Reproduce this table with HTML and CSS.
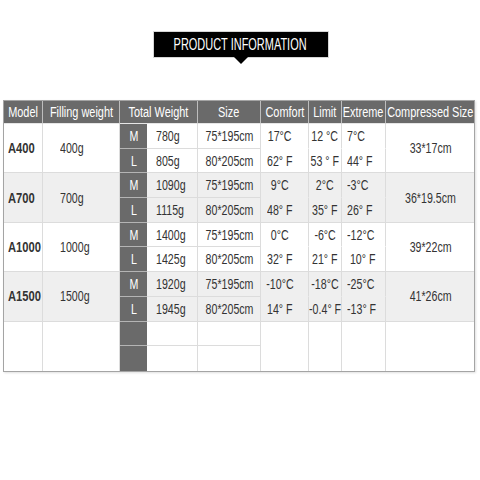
FILE: index.html
```html
<!DOCTYPE html>
<html lang="en">
<head>
<meta charset="utf-8">
<title>Product Information</title>
<link rel="stylesheet" href="styles.css">
</head>
<body>
<div class="page">
  <div class="title-wrap">
    <h1 class="title"><span class="title-text">PRODUCT INFORMATION</span></h1>
  </div>
  <div class="spec">
    <div class="h"><span>Model</span></div>
    <div class="h"><span>Filling weight</span></div>
    <div class="h span2"><span>Total Weight</span></div>
    <div class="h"><span>Size</span></div>
    <div class="h"><span>Comfort</span></div>
    <div class="h"><span>Limit</span></div>
    <div class="h"><span>Extreme</span></div>
    <div class="h last"><span>Compressed Size</span></div>

    <div class="c model"><span>A400</span></div>
    <div class="c fill"><span>400g</span></div>
    <div class="c t"><span>M</span></div>
    <div class="c w"><span>780g</span></div>
    <div class="c s"><span>75*195cm</span></div>
    <div class="c tc top"><span>17°C</span></div>
    <div class="c tl top"><span>12 °C</span></div>
    <div class="c te top"><span>7°C</span></div>
    <div class="c cs"><span>33*17cm</span></div>
    <div class="c t"><span>L</span></div>
    <div class="c w"><span>805g</span></div>
    <div class="c s"><span>80*205cm</span></div>
    <div class="c tc"><span>62° F</span></div>
    <div class="c tl"><span>53 ° F</span></div>
    <div class="c te"><span>44° F</span></div>

    <div class="c model g"><span>A700</span></div>
    <div class="c fill g"><span>700g</span></div>
    <div class="c t"><span>M</span></div>
    <div class="c w g"><span>1090g</span></div>
    <div class="c s g"><span>75*195cm</span></div>
    <div class="c tc top g"><span>9°C</span></div>
    <div class="c tl top g"><span>2°C</span></div>
    <div class="c te top g"><span>-3°C</span></div>
    <div class="c cs g"><span>36*19.5cm</span></div>
    <div class="c t"><span>L</span></div>
    <div class="c w g"><span>1115g</span></div>
    <div class="c s g"><span>80*205cm</span></div>
    <div class="c tc g"><span>48° F</span></div>
    <div class="c tl g"><span>35° F</span></div>
    <div class="c te g"><span>26° F</span></div>

    <div class="c model"><span>A1000</span></div>
    <div class="c fill"><span>1000g</span></div>
    <div class="c t"><span>M</span></div>
    <div class="c w"><span>1400g</span></div>
    <div class="c s"><span>75*195cm</span></div>
    <div class="c tc top"><span>0°C</span></div>
    <div class="c tl top"><span>-6°C</span></div>
    <div class="c te top"><span>-12°C</span></div>
    <div class="c cs"><span>39*22cm</span></div>
    <div class="c t"><span>L</span></div>
    <div class="c w"><span>1425g</span></div>
    <div class="c s"><span>80*205cm</span></div>
    <div class="c tc"><span>32° F</span></div>
    <div class="c tl"><span>21° F</span></div>
    <div class="c te"><span>&nbsp;10° F</span></div>

    <div class="c model g"><span>A1500</span></div>
    <div class="c fill g"><span>1500g</span></div>
    <div class="c t"><span>M</span></div>
    <div class="c w g"><span>1920g</span></div>
    <div class="c s g"><span>75*195cm</span></div>
    <div class="c tc top g"><span>-10°C</span></div>
    <div class="c tl top g"><span>-18°C</span></div>
    <div class="c te top g"><span>-25°C</span></div>
    <div class="c cs g"><span>41*26cm</span></div>
    <div class="c t"><span>L</span></div>
    <div class="c w g"><span>1945g</span></div>
    <div class="c s g"><span>80*205cm</span></div>
    <div class="c tc g"><span>14° F</span></div>
    <div class="c tl g"><span>-0.4° F</span></div>
    <div class="c te g"><span>-13° F</span></div>

    <div class="c model end"></div>
    <div class="c fill end"></div>
    <div class="c t"></div>
    <div class="c w"></div>
    <div class="c s"></div>
    <div class="c tc span end"></div>
    <div class="c tl span end"></div>
    <div class="c te span end"></div>
    <div class="c cs end"></div>
    <div class="c t end"></div>
    <div class="c w end"></div>
    <div class="c s end"></div>
  </div>
</div>
</body>
</html>
```

FILE: styles.css
```css
* { box-sizing: border-box; }

html, body {
  margin: 0;
  padding: 0;
  background: #ffffff;
}

body {
  width: 480px;
  height: 480px;
  overflow: hidden;
  font-family: "Liberation Sans", Arial, sans-serif;
  color: #333333;
}

.page {
  padding-top: 32px;
}

.title-wrap {
  display: flex;
  justify-content: center;
}

.title {
  position: relative;
  margin: 0 0 0 1px;
  width: 174px;
  height: 25px;
  background: #000000;
  box-shadow: 0 0 0 1px #d6d6d6;
  display: flex;
  align-items: center;
  justify-content: center;
  font-weight: normal;
}

.title::after {
  content: "";
  position: absolute;
  left: 50%;
  bottom: -7px;
  margin-left: -7px;
  border-left: 7px solid transparent;
  border-right: 7px solid transparent;
  border-top: 7px solid #000000;
}

.title-text {
  display: inline-block;
  color: #ffffff;
  font-size: 17px;
  line-height: 1;
  white-space: nowrap;
  transform: scaleX(0.645);
}

.spec {
  margin: 43px 0 0 3px;
  width: 472px;
  border: 1px solid #a4a4a4;
  box-shadow: 1px 1px 2px rgba(0, 0, 0, 0.12);
  display: grid;
  grid-template-columns: 39px 77px 27px 51px 63px 48px 33px 44px 88px;
  grid-template-rows: 23px repeat(10, 24.7px);
  font-size: 14px;
}

.h {
  background: #6a6a6a;
  color: #ffffff;
  border-right: 1px solid #bdbdbd;
  border-bottom: 1px solid #e6e6e6;
  display: flex;
  align-items: center;
  justify-content: center;
  white-space: nowrap;
}

.h span {
  display: inline-block;
  transform: scaleX(0.78);
  transform-origin: center;
}

.h.span2 { grid-column: span 2; }
.h.last { border-right: none; }

.c {
  background: #ffffff;
  border-right: 1px solid #dcdcdc;
  border-bottom: 1px solid #dcdcdc;
  display: flex;
  align-items: center;
  white-space: nowrap;
}

.c span {
  display: inline-block;
  transform: scaleX(0.76);
  transform-origin: center;
}

.c.g { background: #efefef; }

.model {
  grid-row: span 2;
  padding-left: 4px;
  font-weight: bold;
}

.model span {
  transform: scaleX(0.8);
  transform-origin: left center;
}

.fill {
  grid-row: span 2;
  padding-left: 17px;
}

.fill span,
.w span,
.te span {
  transform-origin: left center;
}

.t {
  background: #6a6a6a !important;
  color: #ffffff;
  justify-content: center;
  border-right: none;
  border-bottom: 1px solid #b4b4b4;
}

.w { padding-left: 9px; }

.s { justify-content: center; padding-left: 1px; }

.tc {
  justify-content: center;
  padding-right: 9px;
}

.tl { justify-content: center; }

.te { padding-left: 5px; }

.cs {
  grid-row: span 2;
  justify-content: center;
  padding-left: 1px;
  border-right: none;
}

.top { border-bottom-color: transparent; }
.c.g.top { border-bottom-color: #efefef; }

.span { grid-row: span 2; }

.end { border-bottom: none; }
.t.end { border-bottom: none; }
```
